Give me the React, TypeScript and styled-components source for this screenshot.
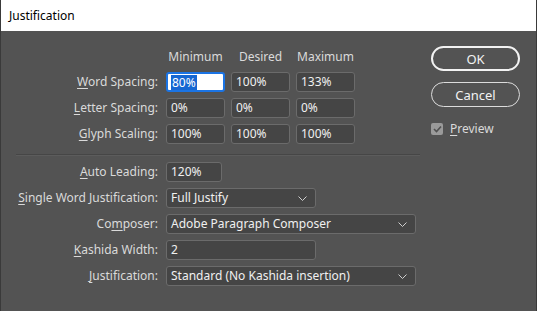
import React from "react";
import styled, { createGlobalStyle } from "styled-components";

const GlobalStyle = createGlobalStyle`
    html, body {
        margin: 0;
        padding: 0;
        background: #535353;
    }
    body {
        font-family: "Noto Sans", "Open Sans", sans-serif;
        font-size: 12px;
    }
`;

const Window = styled.div`
    width: 537px;
    height: 311px;
    display: flex;
    flex-direction: column;
    background: #535353;
    border-left: 1px solid #3a3a3a;
    border-right: 1px solid #3a3a3a;
    box-sizing: border-box;
    overflow: hidden;
`;

const TitleBar = styled.div`
    height: 31px;
    flex: none;
    background: #ffffff;
    display: flex;
    align-items: center;
    padding-left: 8px;
    color: #000;
    font-size: 12px;
`;

const Body = styled.div`
    flex: 1;
    display: flex;
    gap: 11px;
    padding: 15px 0 0 15px;
`;

const FormColumn = styled.div`
    width: 404px;
    display: flex;
    flex-direction: column;
    padding-top: 3px;
`;

const SpacingGrid = styled.div`
    display: grid;
    grid-template-columns: 144px 59px 59px 59px;
    column-gap: 6px;
    row-gap: 6px;
    align-items: center;
`;

const FieldGrid = styled.div`
    display: grid;
    grid-template-columns: 144px 1fr;
    column-gap: 6px;
    row-gap: 6px;
    align-items: center;
`;

const Header = styled.div`
    color: #dadada;
    text-align: center;
    line-height: 16px;
    margin-bottom: 1px;
`;

const Label = styled.label`
    color: #dadada;
    text-align: right;
    padding-right: 2px;
    white-space: nowrap;
    line-height: 20px;
`;

const Key = styled.span`
    text-decoration: underline;
    text-underline-offset: 2px;
`;

const Field = styled.div<{ $width?: number; $active?: boolean }>`
    box-sizing: border-box;
    height: 20px;
    width: ${(p) => (p.$width ? `${p.$width}px` : "100%")};
    background: ${(p) => (p.$active ? "#ffffff" : "#454545")};
    border: ${(p) => (p.$active ? "2px solid #1b74e4" : "1px solid #6b6b6b")};
    border-radius: 3px;
    color: #f0f0f0;
    display: flex;
    align-items: center;
    padding-left: ${(p) => (p.$active ? "3px" : "4px")};
    padding-right: 8px;
    line-height: 18px;
    white-space: nowrap;
`;

const Selected = styled.span`
    background: #1667d2;
    color: #fff;
    line-height: 15px;
    padding: 0 1px;
`;

const SelectText = styled.span`
    flex: 1;
`;

const Divider = styled.div`
    height: 1px;
    background: #464646;
    border-bottom: 1px solid #5c5c5c;
    margin: 10px 0 6px;
`;

const ButtonColumn = styled.div`
    width: 89px;
    display: flex;
    flex-direction: column;
    gap: 11px;
`;

const Button = styled.div<{ $primary?: boolean }>`
    box-sizing: border-box;
    height: 25px;
    border-radius: 13px;
    border: ${(p) => (p.$primary ? "2px solid #f2f2f2" : "1px solid #dcdcdc")};
    color: #f2f2f2;
    font-size: 13px;
    display: flex;
    align-items: center;
    justify-content: center;
`;

const CheckRow = styled.div`
    display: flex;
    align-items: center;
    gap: 7px;
    color: #dadada;
    margin-top: 2px;
`;

const Box = styled.span`
    width: 12px;
    height: 12px;
    border-radius: 2px;
    background: #9a9a9a;
    display: flex;
    align-items: center;
    justify-content: center;
`;

const Chevron = () => (
    <svg width="9" height="5" viewBox="0 0 9 5">
        <path d="M0.5 0.5 L4.5 4.5 L8.5 0.5" fill="none" stroke="#cfcfcf" strokeWidth="1" />
    </svg>
);

const spacingRows = [
    { key: "W", rest: "ord Spacing:", values: ["80%", "100%", "133%"] },
    { key: "L", rest: "etter Spacing:", values: ["0%", "0%", "0%"] },
    { key: "G", rest: "lyph Scaling:", values: ["100%", "100%", "100%"] },
];

export default function App() {
    return (
        <>
            <GlobalStyle />
            <Window>
                <TitleBar>Justification</TitleBar>
                <Body>
                    <FormColumn>
                        <SpacingGrid>
                            <span />
                            <Header>Minimum</Header>
                            <Header>Desired</Header>
                            <Header>Maximum</Header>
                            {spacingRows.map((row, i) => (
                                <React.Fragment key={row.key}>
                                    <Label>
                                        <Key>{row.key}</Key>
                                        {row.rest}
                                    </Label>
                                    {row.values.map((v, j) =>
                                        i === 0 && j === 0 ? (
                                            <Field key={j} $active>
                                                <Selected>{v}</Selected>
                                            </Field>
                                        ) : (
                                            <Field key={j}>{v}</Field>
                                        )
                                    )}
                                </React.Fragment>
                            ))}
                        </SpacingGrid>
                        <Divider />
                        <FieldGrid>
                            <Label>
                                <Key>A</Key>uto Leading:
                            </Label>
                            <Field $width={56}>120%</Field>
                            <Label>
                                <Key>S</Key>ingle Word Justification:
                            </Label>
                            <Field $width={150}>
                                <SelectText>Full Justify</SelectText>
                                <Chevron />
                            </Field>
                            <Label>
                                Co<Key>m</Key>poser:
                            </Label>
                            <Field $width={250}>
                                <SelectText>Adobe Paragraph Composer</SelectText>
                                <Chevron />
                            </Field>
                            <Label>
                                <Key>K</Key>ashida Width:
                            </Label>
                            <Field $width={150}>2</Field>
                            <Label>
                                <Key>J</Key>ustification:
                            </Label>
                            <Field $width={250}>
                                <SelectText>Standard (No Kashida insertion)</SelectText>
                                <Chevron />
                            </Field>
                        </FieldGrid>
                    </FormColumn>
                    <ButtonColumn>
                        <Button $primary>OK</Button>
                        <Button>Cancel</Button>
                        <CheckRow>
                            <Box>
                                <svg width="9" height="8" viewBox="0 0 9 8">
                                    <path d="M1 4 L3.5 6.5 L8 1.5" fill="none" stroke="#505050" strokeWidth="1.6" />
                                </svg>
                            </Box>
                            <span>
                                <Key>P</Key>review
                            </span>
                        </CheckRow>
                    </ButtonColumn>
                </Body>
            </Window>
        </>
    );
}
